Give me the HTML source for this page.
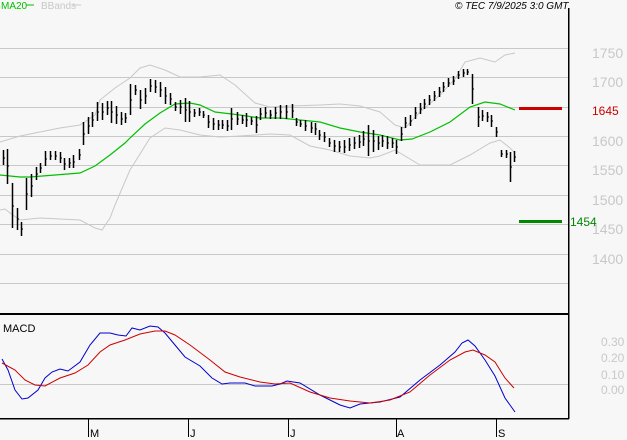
<!DOCTYPE html>
<html><head><meta charset="utf-8"><style>
html,body{margin:0;padding:0;background:#f7f7f7;}
svg{display:block;font-family:"Liberation Sans",sans-serif;}
</style></head><body>
<svg width="627" height="440" viewBox="0 0 627 440" xmlns="http://www.w3.org/2000/svg">
<rect width="627" height="440" fill="#f7f7f7"/>
<g stroke="#c8c8c8" stroke-width="1" shape-rendering="crispEdges">
<line x1="0" y1="48.5" x2="569" y2="48.5"/>
<line x1="0" y1="77.5" x2="569" y2="77.5"/>
<line x1="0" y1="107.5" x2="569" y2="107.5"/>
<line x1="0" y1="136.5" x2="569" y2="136.5"/>
<line x1="0" y1="165.5" x2="569" y2="165.5"/>
<line x1="0" y1="195.5" x2="569" y2="195.5"/>
<line x1="0" y1="224.5" x2="569" y2="224.5"/>
<line x1="0" y1="254.5" x2="569" y2="254.5"/>
<line x1="0" y1="283.5" x2="569" y2="283.5"/>
<line x1="0" y1="384.5" x2="569" y2="384.5"/>
</g>
<g fill="#c8c8c8" font-size="14">
<text x="592" y="58">1750</text>
<text x="592" y="87">1700</text>
<text x="592" y="146">1600</text>
<text x="592" y="175">1550</text>
<text x="592" y="205">1500</text>
<text x="592" y="234">1450</text>
<text x="592" y="264">1400</text>
</g>
<g fill="#c8c8c8" font-size="12">
<text x="601" y="346">0.30</text>
<text x="601" y="362">0.20</text>
<text x="601" y="379">0.10</text>
<text x="601" y="394">0.00</text>
</g>
<polyline fill="none" stroke="#c8c8c8" stroke-width="1" points="0,142 20,136 60,128 80,125 95,115 100,100 115,88 130,78 140,68 150,65 165,70 180,77 200,77 220,75 235,85 255,103 270,107 290,106 320,105 340,104 360,106 380,112 395,125 405,128 420,112 440,95 455,79 465,62 480,58 495,62 505,55 515,53"/>
<polyline fill="none" stroke="#c8c8c8" stroke-width="1" points="0,210 5,209 10,213 20,220 40,218 80,220 95,228 102,230 110,218 115,205 130,170 150,138 165,128 180,130 200,135 220,137 240,136 270,134 290,135 310,146 330,150 350,156 370,158 380,156 395,150 420,165 450,165 470,155 490,143 500,140 510,148 515,153"/>
<polyline fill="none" stroke="#00c000" stroke-width="1.2" points="0,175 20,177 30,177 80,173 95,166 110,155 125,143 130,138 145,124 160,113 175,104 190,103 200,105 215,112 240,115 260,118 280,118 300,120 320,122 340,128 360,132 380,135 400,140 412,139 430,132 450,122 470,107 485,102 500,104 515,110"/>
<path fill="none" stroke="#000" stroke-width="1.5" d="M3.5,150V165M7.5,149V184M12.5,183V228M17.5,208V230M21.5,222V236M26.5,178V210M31.5,174V197M36.5,167V180M40.5,163V173M45.5,151V166M50.5,151V160M55.5,151V160M60.5,152V163M64.5,158V170M69.5,158V168M73.5,155V168M79.5,149V160M83.5,122V145M88.5,117V134M92.5,112V127M97.5,102V121M102.5,103V120M107.5,101V115M111.5,101V123M116.5,106V124M121.5,112V125M125.5,113V123M130.5,84V115M135.5,85V95M140.5,90V109M145.5,88V104M150.5,79V92M155.5,80V93M160.5,82V97M165.5,87V104M170.5,93V105M175.5,102V111M180.5,100V114M185.5,98V122M189.5,101V122M194.5,109V117M199.5,108V116M203.5,111V118M208.5,115V128M213.5,118V130M218.5,120V130M222.5,120V129M227.5,120V131M231.5,108V130M237.5,112V125M242.5,115V124M246.5,113V127M251.5,117V125M256.5,116V133M260.5,108V120M265.5,107V118M270.5,110V119M275.5,107V119M280.5,105V119M286.5,105V119M292.5,104V118M296.5,118V126M300.5,120V127M305.5,120V131M311.5,122V133M315.5,123V135M319.5,130V140M324.5,132V142M329.5,138V147M334.5,140V152M339.5,141V152M344.5,140V153M349.5,138V151M354.5,137V149M359.5,135V148M363.5,131V146M368.5,125V156M373.5,130V152M378.5,136V150M382.5,135V147M387.5,136V149M392.5,138V148M396.5,140V154M401.5,127V141M405.5,117V128M410.5,115V126M415.5,107V119M420.5,103V114M424.5,99V109M429.5,95V105M434.5,91V101M439.5,87V97M443.5,82V92M448.5,78V87M453.5,76V85M458.5,71V79M463.5,69V77M467.5,69V75M472.5,74V104M478.5,107V127M482.5,110V121M487.5,112V122M491.5,115V127M496.5,127V137M501.5,150V157M506.5,150V158M510.5,152V182M514.5,151V162"/>
<path fill="none" stroke="#000" stroke-width="1" d="M3,158h2M7,166h2M12,206h2M17,219h2M21,229h2M26,194h2M31,186h2M36,174h2M40,168h2M45,159h2M50,156h2M55,156h2M60,158h2M64,164h2M69,163h2M73,162h2M79,155h2M83,134h2M88,126h2M92,120h2M97,112h2M102,112h2M107,108h2M111,112h2M116,115h2M121,119h2M125,118h2M130,100h2M135,90h2M140,100h2M145,96h2M150,86h2M155,87h2M160,90h2M165,96h2M170,99h2M175,107h2M180,107h2M185,110h2M189,112h2M194,113h2M199,112h2M203,115h2M208,122h2M213,124h2M218,125h2M222,125h2M227,126h2M231,119h2M237,119h2M242,120h2M246,120h2M251,121h2M256,125h2M260,114h2M265,113h2M270,115h2M275,113h2M280,112h2M286,112h2M292,111h2M296,122h2M300,124h2M305,126h2M311,128h2M315,129h2M319,135h2M324,137h2M329,143h2M334,146h2M339,147h2M344,147h2M349,145h2M354,143h2M359,142h2M363,139h2M368,141h2M373,141h2M378,143h2M382,141h2M387,143h2M392,143h2M396,147h2M401,134h2M405,123h2M410,121h2M415,113h2M420,109h2M424,104h2M429,100h2M434,96h2M439,92h2M443,87h2M448,83h2M453,81h2M458,75h2M463,73h2M467,72h2M472,89h2M478,117h2M482,116h2M487,117h2M491,121h2M496,132h2M501,154h2M506,154h2M510,167h2M514,157h2"/>
<rect x="519" y="107" width="43" height="3" fill="#cc0000"/>
<text x="592" y="115" fill="#cc0000" font-size="12">1645</text>
<rect x="519" y="220" width="43" height="3" fill="#008800"/>
<text x="570" y="226" fill="#008800" font-size="12">1454</text>
<polyline fill="none" stroke="#0000cc" stroke-width="1" points="2,359 8,370 15,390 22,399 28,398 38,390 45,378 52,372 60,369 68,371 80,362 90,345 100,333 110,333 118,335 126,336 132,328 140,330 150,326 158,327 165,333 175,345 185,357 200,366 212,378 222,384 230,383 245,383 255,386 272,386 280,384 287,381 300,383 320,395 340,405 350,408 360,404 380,402 400,397 420,380 440,365 455,352 462,343 468,340 475,346 485,360 495,376 500,387 505,398 515,412"/>
<polyline fill="none" stroke="#cc0000" stroke-width="1" points="2,363 15,370 25,380 35,385 45,386 60,378 75,373 88,365 100,352 110,345 125,340 140,334 155,331 165,331 175,335 190,345 210,360 225,372 240,377 260,382 275,384 290,383 310,392 330,398 350,401 370,403 390,400 410,392 430,375 450,360 465,352 473,350 485,355 495,362 505,378 514,388"/>
<text x="3" y="332" font-size="11" fill="#000">MACD</text>
<rect x="0" y="313" width="569" height="2" fill="#000"/>
<rect x="0" y="418" width="569" height="1.5" fill="#000"/>
<rect x="568" y="8" width="1.5" height="411" fill="#000"/>
<g stroke="#000" stroke-width="1">
<line x1="88.5" y1="419" x2="88.5" y2="437"/>
<line x1="188.5" y1="419" x2="188.5" y2="437"/>
<line x1="288.5" y1="419" x2="288.5" y2="437"/>
<line x1="396.5" y1="419" x2="396.5" y2="437"/>
<line x1="496.5" y1="419" x2="496.5" y2="437"/>
</g>
<g font-size="11" fill="#000">
<text x="90" y="437">M</text>
<text x="190" y="437">J</text>
<text x="290" y="437">J</text>
<text x="397" y="437">A</text>
<text x="498" y="437">S</text>
</g>
<text x="1" y="9" font-size="10" fill="#00c000">MA20</text>
<line x1="26" y1="5" x2="34" y2="5" stroke="#00c000"/>
<text x="41" y="9" font-size="10" fill="#c8c8c8">BBands</text>
<line x1="73" y1="5" x2="81" y2="5" stroke="#c8c8c8"/>
<text x="455" y="9" font-size="10" font-style="italic" fill="#000">© TEC 7/9/2025 3:0 GMT</text>
</svg>
</body></html>
